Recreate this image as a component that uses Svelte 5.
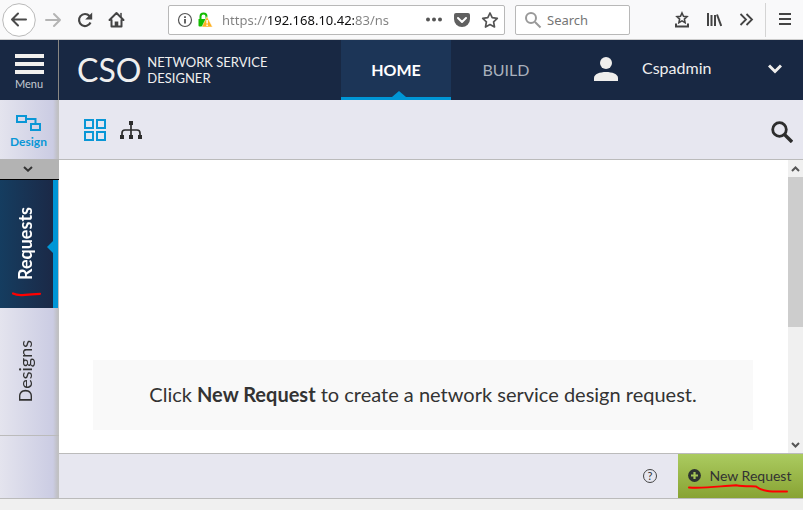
<script>
  let url = $state('https://192.168.10.42:83/ns');
  let term = $state('');
</script>

<div class="window">
  <div class="browser">
    <button class="back" aria-label="Back">
      <svg width="34" height="34" viewBox="0 0 34 34" fill="none" stroke="#4a4a4a" stroke-width="2"><circle cx="17" cy="17" r="16.3" fill="#fff" stroke="#b9b9b9" stroke-width="1" /><path d="M24 16.500H10M16 10.500 10 16.500l6 6" stroke-linecap="round" stroke-linejoin="round" /></svg>
    </button>
    <button class="nav" aria-label="Forward">
      <svg width="18" height="18" viewBox="0 0 18 18" fill="none" stroke="#b4b4b4" stroke-width="2" stroke-linecap="round" stroke-linejoin="round"><path d="M2 9h14M10 3l6 6-6 6" /></svg>
    </button>
    <button class="nav" aria-label="Reload">
      <svg width="18" height="18" viewBox="0 0 18 18" fill="none" stroke="#444" stroke-width="2.200"><path d="M14.500 11.500A6 6 0 1 1 13.500 5L15 7" /><path d="M16.200 1.500v7h-7z" fill="#444" stroke="none" /></svg>
    </button>
    <button class="nav" aria-label="Home">
      <svg width="18" height="18" viewBox="0 0 18 18" fill="none" stroke="#444" stroke-width="2" stroke-linejoin="round" stroke-linecap="round"><path d="M1.500 9 8.500 2l7 7M3.500 9v6.500h10V9" /><path d="M6.700 15.500v-5h3.600v5z" fill="#444" stroke="none" /><path d="M13 2.500v3" stroke-width="1.500" /></svg>
    </button>
    <div class="address">
      <svg width="16" height="16" viewBox="0 0 16 16"><circle cx="8" cy="8" r="6.500" fill="none" stroke="#555" stroke-width="1.200" /><path d="M8 7v4.500M8 4.200V6" stroke="#555" stroke-width="1.800" /></svg>
      <svg class="lock" width="16" height="16" viewBox="0 0 16 16"><path d="M3.500 8V4.500a3 3 0 0 1 6 0V7" fill="none" stroke="#12bc00" stroke-width="2" /><path d="M1.500 7h9.500v7.500H2.500q-1 0-1-1z" fill="#12bc00" /><path d="M10 4.500 15.500 15H4.800z" fill="#ffb01f" stroke="#fff" stroke-width=".5" /><path d="M10.100 8v3.500M10.100 12.500V14" stroke="#fff" stroke-width="1.500" /></svg>
      <input class="url" aria-label="Address" bind:value={url} />
      <button aria-label="Page actions"><svg width="18" height="18" viewBox="0 0 18 18" fill="#555"><circle cx="3" cy="8.500" r="2" /><circle cx="9" cy="8.500" r="2" /><circle cx="15" cy="8.500" r="2" /></svg></button>
      <button aria-label="Save to Pocket"><svg width="18" height="18" viewBox="0 0 18 18"><path d="M3 2h12q2 0 2 2v4a8 8 0 0 1-16 0V4q0-2 2-2z" fill="#606060" /><path d="m5 7 4 4 4-4" fill="none" stroke="#fff" stroke-width="2" stroke-linecap="round" stroke-linejoin="round" /></svg></button>
      <button aria-label="Bookmark"><svg width="18" height="18" viewBox="0 0 18 18"><path d="m9 2 2.200 4.700 5.100.7-3.700 3.500.9 5.100L9 13.500 4.500 16l.9-5.100-3.700-3.500 5.100-.7z" fill="none" stroke="#555" stroke-width="1.700" stroke-linejoin="round" /></svg></button>
    </div>
    <label class="search">
      <svg width="18" height="18" viewBox="0 0 18 18" fill="none" stroke="#999" stroke-width="2"><circle cx="7" cy="7" r="5" /><path d="m11 11 5.500 5.500" /></svg>
      <input placeholder="Search" aria-label="Search the web" bind:value={term} />
    </label>
    <div class="tools">
      <button aria-label="Bookmarks"><svg width="16" height="18" viewBox="0 0 16 18" fill="none" stroke="#444" stroke-width="1.600"><path d="m8 2 1.500 3.300 3.500.4-2.600 2.400.7 3.500L8 9.900l-3.100 1.700.7-3.500L3 5.700l3.500-.4z" /><path d="M2 12.500V15.500h12v-3" stroke-width="2" /></svg></button>
      <button aria-label="Library"><svg width="16" height="18" viewBox="0 0 16 18" stroke="#444" stroke-width="2"><path d="M2 2v13M5.500 4v11M9 4v11" /><path d="m11 3.500 4.200 11.500" /></svg></button>
      <button aria-label="More tools"><svg width="16" height="18" viewBox="0 0 16 18" fill="none" stroke="#444" stroke-width="1.800"><path d="m2.500 3 5.500 5.500-5.500 5.500M8.500 3 14 8.500 8.500 14" /></svg></button>
    </div>
    <button class="menu" aria-label="Open menu"><svg width="12" height="14" viewBox="0 0 12 14" stroke="#444" stroke-width="2"><path d="M0 1h12M0 6h12M0 11h12" /></svg></button>
  </div>

  <header>
    <button class="burger">
      <svg width="29" height="20" viewBox="0 0 29 20" fill="#f1f0ee"><path d="M0 0h29v4H0zM0 8h29v4H0zM0 16h29v4H0z" /></svg>
      <span>Menu</span>
    </button>
    <div class="brand"><b>CSO</b><span>NETWORK SERVICE<br />DESIGNER</span></div>
    <nav>
      <a class="active" href="#home">HOME</a>
      <a href="#build">BUILD</a>
    </nav>
    <button class="user">
      <svg width="24" height="24" viewBox="0 0 24 24" fill="#efeeec"><circle cx="12" cy="6" r="6" /><path d="M0 24v-3c0-8 24-8 24 0v3z" /></svg>
      <span>Cspadmin</span>
      <svg class="chev" width="14" height="10" viewBox="0 0 14 10" fill="none" stroke="#efeeec" stroke-width="3"><path d="m1 1.500 6 6 6-6" /></svg>
    </button>
  </header>

  <div class="body">
    <aside>
      <a class="design" href="#design">
        <svg width="26" height="18" viewBox="0 0 26 18" fill="none" stroke="#0a97d6" stroke-width="2"><path d="M1 2h9v6H1zM15 10h9v6h-9zM10 5h9.500v5" /></svg>
        <span>Design</span>
      </a>
      <button class="fold" aria-label="Collapse section"><svg width="10" height="6" viewBox="0 0 10 6" fill="none" stroke="#333" stroke-width="2"><path d="m1 1 4 3.700L9 1" /></svg></button>
      <a class="side requests" href="#requests">
        <span>Requests</span>
        <svg class="mark" width="30" height="6" viewBox="0 0 30 6" fill="none" stroke="#f00" stroke-width="2.200" stroke-linecap="round"><path d="M1 2.500c4 2 8 1.800 12 1.300s8-.8 15-1" /></svg>
      </a>
      <a class="side designs" href="#designs"><span>Designs</span></a>
    </aside>

    <main>
      <div class="toolbar">
        <button aria-label="Grid view"><svg width="22" height="22" viewBox="0 0 22 22" fill="none" stroke="#0a97d6" stroke-width="2"><path d="M1 1h8v8H1zM13 1h8v8h-8zM1 13h8v8H1zM13 13h8v8h-8z" /></svg></button>
        <button aria-label="Tree view"><svg width="22" height="18" viewBox="0 0 22 18" fill="#2d2d2d"><path d="M9 0h4v4H9zM0 14h4v4H0zM9 14h4v4H9zM18 14h4v4h-4z" /><path d="M11 3v12M2 15v-3q0-3 3-3h12q3 0 3 3v3" fill="none" stroke="#2d2d2d" stroke-width="1.700" /></svg></button>
        <button class="find" aria-label="Search requests"><svg width="22" height="22" viewBox="0 0 22 22" fill="none" stroke="#2d2d2d"><circle cx="8.500" cy="8.500" r="6.800" stroke-width="2.800" /><path d="m13.500 13.500 7.500 7.500" stroke-width="3.400" /></svg></button>
      </div>
      <div class="content">
        <div class="pane"><p>Click <b>New Request</b> to create a network service design request.</p></div>
        <div class="scroll">
          <button aria-label="Scroll up"><svg width="9" height="6" viewBox="0 0 9 6" fill="none" stroke="#555" stroke-width="2"><path d="m1 5 3.500-3.500L8 5" /></svg></button>
          <div class="track"><div class="thumb"></div></div>
          <button aria-label="Scroll down"><svg width="9" height="6" viewBox="0 0 9 6" fill="none" stroke="#555" stroke-width="2"><path d="m1 1 3.500 3.500L8 1" /></svg></button>
        </div>
      </div>
      <footer>
        <button class="help" aria-label="Help">?</button>
        <button class="new">
          <svg width="13" height="13" viewBox="0 0 13 13"><circle cx="6.500" cy="6.500" r="6.400" fill="#2d3330" /><path d="M6.500 3v7M3 6.500h7" stroke="#a3c356" stroke-width="2.200" /></svg>
          <span>New Request</span>
          <svg class="mark" width="102" height="9" viewBox="0 0 102 9" fill="none" stroke="#f00" stroke-width="2" stroke-linecap="round"><path d="M1 3.500c18 1 31-1.500 47-2.300 7 1.200 14 1 20 1.300 5 4 12 5.500 31 5" /></svg>
        </button>
      </footer>
    </main>
  </div>
  <div class="status"></div>
</div>

<style>
  :global(body) { margin: 0; }
  .window { min-height: 100vh; display: flex; flex-direction: column; font-family: Lato, sans-serif; color: #333; }
  .window :global(*) { box-sizing: border-box; }
  button { border: 0; padding: 0; margin: 0; background: none; font: inherit; color: inherit; display: flex; align-items: center; justify-content: center; cursor: pointer; }
  a { color: inherit; text-decoration: none; }
  svg { display: block; flex: none; }
  input { border: 0; padding: 0; outline: 0; min-width: 0; background: none; font: 13px "Noto Sans", sans-serif; }

  .browser { height: 40px; display: flex; align-items: center; background: #f9f9fa; border-bottom: 1px solid #ccc; }
  .back { margin-left: 2px; margin-right: 8px; }
  .nav { width: 18px; margin-right: 14px; }
  .address { flex: 1; height: 30px; margin-left: 28px; display: flex; align-items: center; background: #fff; border: 1px solid #b8b8b8; border-radius: 2px; padding: 0 5px 0 8px; }
  .address button { margin-left: 10px; }
  .lock { margin-left: 4px; }
  .url { flex: 1; width: 0; margin: 0 24px 0 9px; height: 24px; color: transparent; caret-color: #000; background: linear-gradient(90deg, #808080 45px, #0c0c0d 45px, #0c0c0d 132px, #808080 132px); background-clip: text; }
  .search { width: 115px; height: 30px; margin-left: 10px; display: flex; align-items: center; gap: 5px; padding-left: 8px; background: #fff; border: 1px solid #b8b8b8; border-radius: 2px; }
  .search input { width: 80px; }
  .search input::placeholder { color: #757575; opacity: 1; }
  .tools { display: flex; gap: 16px; margin-left: 44px; padding-right: 11px; }
  .menu { width: 38px; height: 34px; border-left: 1px solid #d4d4d4; }

  header { height: 60px; display: flex; background: #182843; color: #efefef; }
  .burger { width: 59px; border-right: 1px solid #898783; flex-direction: column; gap: 3px; font-size: 11px; line-height: 14px; color: #c5cad2; padding-top: 4px; }
  .brand { display: flex; align-items: center; padding-left: 18px; gap: 6px; width: 282px; flex: none; }
  .brand b { font-size: 32px; line-height: 40px; font-weight: normal; }
  .brand span { font-size: 13px; line-height: 16px; }
  nav { display: flex; }
  nav a { width: 110px; font-size: 16px; line-height: 60px; text-align: center; color: #a9b0bc; position: relative; }
  nav a.active { background: #1c3557; color: #fff; font-weight: bold; box-shadow: inset 0 -3px #0096d6; }
  nav a.active::after { content: ""; position: absolute; left: 51px; bottom: 3px; border: 7px solid transparent; border-top: 0; border-bottom: 6px solid #0096d6; }
  .user { flex: 1; justify-content: flex-start; padding: 0 21px 2px 33px; font-size: 16px; line-height: 20px; }
  .user span { margin-left: 24px; padding-bottom: 2px; }
  .chev { margin-left: auto; }

  .body { flex: 1; display: flex; border-bottom: 1px solid #bbb; }
  aside { width: 59px; flex: none; display: flex; flex-direction: column; background: linear-gradient(90deg, #e4e4ee, #cbcce3 53px, #c1c1c7 57px, #c1c1c1); }
  .design { height: 59px; display: flex; flex-direction: column; align-items: center; padding: 14px 2px 0 0; gap: 2px; font-size: 12px; font-weight: bold; line-height: 16px; color: #0a97d6; }
  .fold { height: 21px; background: #b3b3b3; border-bottom: 1px solid #000; padding-right: 3px; }
  .side { display: flex; align-items: center; justify-content: center; font-size: 18px; line-height: 24px; position: relative; }
  .side span { writing-mode: vertical-rl; transform: rotate(180deg); }
  .requests { height: 128px; margin-right: 1px; padding-right: 3px; color: #fff; font-weight: bold; background: linear-gradient(90deg, #153d60, #1b2947); border-right: 5px solid #0096d6; }
  .requests::after { content: ""; position: absolute; right: 0; top: 61px; border: 6px solid transparent; border-left: 0; border-right-color: #0096d6; }
  .requests .mark { position: absolute; left: 12px; bottom: 11px; }
  .designs { height: 128px; border-bottom: 1px solid #bbb; padding-right: 9px; }

  main { flex: 1; min-width: 0; display: flex; flex-direction: column; }
  .toolbar { height: 60px; display: flex; align-items: center; gap: 14px; padding: 0 10px 0 25px; background: #e7e7f0; border-bottom: 1px solid #bbb; }
  .find { margin-left: auto; padding-top: 4px; }
  .content { flex: 1; display: flex; }
  .pane { flex: 1; padding: 200px 35px 23px 34px; background: #fff; }
  p { margin: 0; padding: 19px 20px 21px; background: #f9f9f9; font-size: 20px; line-height: 30px; text-align: center; }
  .scroll { width: 15px; display: flex; flex-direction: column; background: #f0f0f0; }
  .scroll button { height: 17px; }
  .track { flex: 1; }
  .thumb { height: 150px; background: #cdcdcd; }
  footer { height: 45px; display: flex; justify-content: flex-end; align-items: center; background: #e7e7f0; border-top: 1px solid #bbb; }
  .help { width: 14px; height: 14px; border: 1px solid #444; border-radius: 50%; font-size: 11px; line-height: 12px; margin-right: 21px; }
  .new { position: relative; width: 125px; height: 44px; gap: 9px; padding: 0 2px 2px 0; background: linear-gradient(#abcb60, #88a333); font-size: 14px; }
  .new .mark { position: absolute; left: 10px; bottom: 5px; }
  .status { height: 11px; background: #f0f0f0; }
</style>
